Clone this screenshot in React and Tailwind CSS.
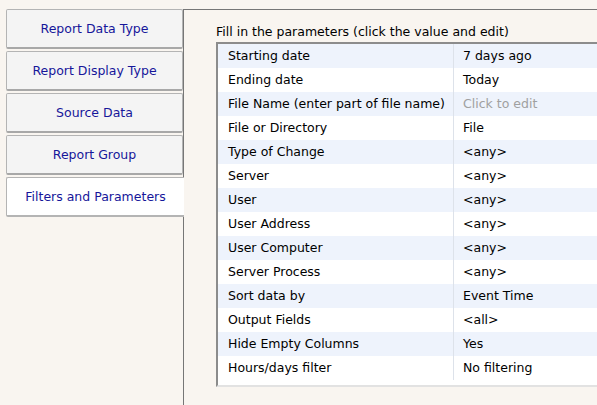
const tabs = [
  "Report Data Type",
  "Report Display Type",
  "Source Data",
  "Report Group",
  "Filters and Parameters",
];

const params = [
  ["Starting date", "7 days ago"],
  ["Ending date", "Today"],
  ["File Name (enter part of file name)", "Click to edit", true],
  ["File or Directory", "File"],
  ["Type of Change", "<any>"],
  ["Server", "<any>"],
  ["User", "<any>"],
  ["User Address", "<any>"],
  ["User Computer", "<any>"],
  ["Server Process", "<any>"],
  ["Sort data by", "Event Time"],
  ["Output Fields", "<all>"],
  ["Hide Empty Columns", "Yes"],
  ["Hours/days filter", "No filtering"],
];

function App() {
  const active = "Filters and Parameters";

  return (
    <div
      className="w-[597px] h-[405px] overflow-hidden bg-[#f9f5f0] flex text-[12.5px] text-black"
      style={{ fontFamily: '"DejaVu Sans", Verdana, sans-serif' }}
    >
      <div className="w-[183px] shrink-0 pl-[6px] pt-[9px] flex flex-col gap-[2px]">
        {tabs.map((tab) =>
          tab === active ? (
            <div
              key={tab}
              className="relative z-10 w-[178px] h-[40px] pt-[2px] flex items-center justify-center bg-white border border-r-0 border-[#b4b4b4] border-b-2 rounded-l-[2px] text-[#16169a]"
            >
              {tab}
            </div>
          ) : (
            <div
              key={tab}
              className="w-[177px] h-[40px] pt-[2px] flex items-center justify-center bg-[#f4f4f4] border border-[#b4b4b4] border-b-2 border-b-[#a8a8a8] rounded-[2px] text-[#16169a]"
            >
              {tab}
            </div>
          )
        )}
      </div>

      <div className="mt-[9px] flex-1 border-l border-t border-[#767676] pl-[32px] pt-[12px]">
        <p className="whitespace-nowrap leading-[20px]">
          Fill in the parameters (click the value and edit)
        </p>
        <div className="w-[420px] bg-white border-t-2 border-l-2 border-t-[#8c8c8c] border-l-[#8c8c8c] border-b-2 border-b-[#e2e2e2] pb-[5px]">
          {params.map(([label, value, muted], i) => (
            <div
              key={label}
              className={`flex h-[24px] items-center ${
                i % 2 === 0 ? "bg-[#eef3fc]" : "bg-white"
              }`}
            >
              <div className="w-[236px] shrink-0 pl-[10px] whitespace-nowrap border-r border-[#dde2ea] h-full flex items-center">
                {label}
              </div>
              <div
                className={`pl-[9px] whitespace-nowrap ${
                  muted ? "text-[#a0a0a0]" : ""
                }`}
              >
                {value}
              </div>
            </div>
          ))}
        </div>
      </div>
    </div>
  );
}

export default App;
